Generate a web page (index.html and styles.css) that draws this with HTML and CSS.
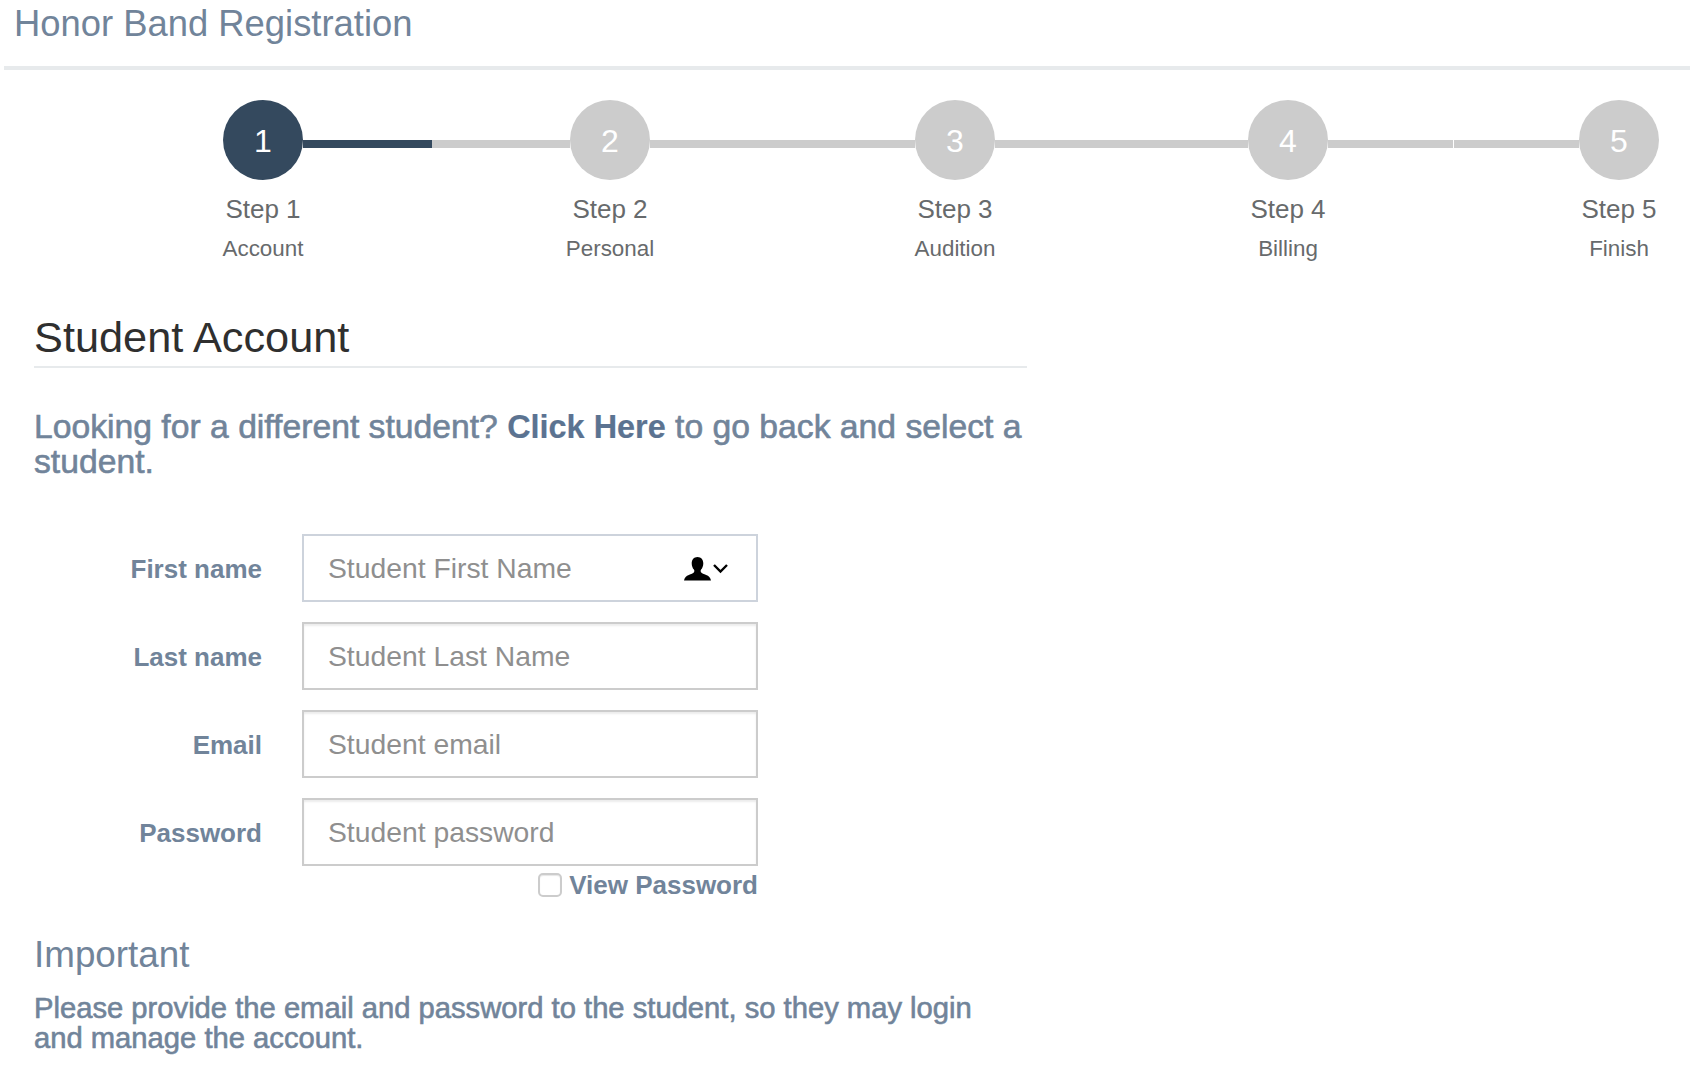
FILE: index.html
```html
<!DOCTYPE html>
<html lang="en">
<head>
<meta charset="utf-8">
<title>Honor Band Registration</title>
<link rel="stylesheet" href="styles.css">
</head>
<body>
<header class="top"><h1 class="brand">Honor Band Registration</h1></header>
<nav class="wizard">
  <div class="step current"><div class="dot">1</div><div class="step-name">Step 1</div><div class="step-sub">Account</div></div>
  <div class="link c1"><div class="fill"></div></div>
  <div class="step"><div class="dot">2</div><div class="step-name">Step 2</div><div class="step-sub">Personal</div></div>
  <div class="link c2"></div>
  <div class="step"><div class="dot">3</div><div class="step-name">Step 3</div><div class="step-sub">Audition</div></div>
  <div class="link c3"></div>
  <div class="step"><div class="dot">4</div><div class="step-name">Step 4</div><div class="step-sub">Billing</div></div>
  <div class="link c4"><div class="gap"></div></div>
  <div class="step"><div class="dot">5</div><div class="step-name">Step 5</div><div class="step-sub">Finish</div></div>
</nav>
<main class="content">
  <h2 class="section-title">Student Account</h2>
  <p class="lookup">Looking for a different student? <a class="lookup-link" href="#">Click Here</a> to go back and select a student.</p>
  <form class="form">
    <label class="field-label" for="fn">First name</label>
    <div class="input-wrap">
      <input class="input first" id="fn" type="text" placeholder="Student First Name">
      <svg class="contact-icon" width="46" height="24" viewBox="0 0 46 24" aria-hidden="true">
        <path fill="#000" d="M13.500 0C9.800 0 7.700 2.800 7.700 6.200c0 2.600.9 4.900 2.200 6.400.6.800.6 1.900.1 2.700-.8 1.200-2.900 1.800-5.200 2.600C2.300 18.900.6 20.200 0 23.500h27c-.6-3.300-2.300-4.600-4.800-5.600-2.300-.8-4.400-1.400-5.200-2.600-.5-.8-.5-1.900.1-2.700 1.300-1.500 2.200-3.800 2.200-6.400C19.300 2.800 17.200 0 13.500 0z"/>
        <path fill="none" stroke="#000" stroke-width="2.400" d="M30 8l6.500 6.500L43 8"/>
      </svg>
    </div>
    <label class="field-label" for="ln">Last name</label>
    <div class="input-wrap"><input class="input" id="ln" type="text" placeholder="Student Last Name"></div>
    <label class="field-label" for="em">Email</label>
    <div class="input-wrap"><input class="input" id="em" type="text" placeholder="Student email"></div>
    <label class="field-label" for="pw">Password</label>
    <div class="input-wrap"><input class="input" id="pw" type="text" placeholder="Student password"></div>
  </form>
  <label class="view-pass"><span class="check"></span><span>View Password</span></label>
  <h3 class="important">Important</h3>
  <p class="note">Please provide the email and password to the student, so they may login and manage the account.</p>
</main>
</body>
</html>
```
FILE: styles.css
```css
* { box-sizing: border-box; }
html, body { margin: 0; padding: 0; background: #fff; }
body { font-family: "Liberation Sans", Arial, sans-serif; color: #676a6c; height: 1066px; overflow: hidden; }

.top { margin-left: 4px; height: 70px; border-bottom: 4px solid #e7eaec; padding-left: 10px; }
.brand { margin: 0; font-size: 36.400px; font-weight: 400; line-height: 48px; color: #71849a; }

.wizard { display: flex; padding: 30px 0 0 223px; align-items: flex-start; }
.step { width: 80px; display: flex; flex-direction: column; align-items: center; flex: none; }
.dot { width: 80px; height: 80px; border-radius: 50%; background: #ccc; color: #fff; font-size: 32px; line-height: 83px; text-align: center; }
.current .dot { background: #34495e; }
.step-name { font-size: 26px; line-height: 30px; margin-top: 14px; white-space: nowrap; }
.step-sub { font-size: 22.400px; line-height: 26px; margin-top: 12px; white-space: nowrap; }
.link { height: 8px; margin-top: 40px; background: #ccc; flex: none; position: relative; }
.c1 { width: 267px; }
.c2 { width: 265px; }
.c3 { width: 253px; }
.c4 { width: 251px; }
.fill { width: 129px; height: 8px; background: #34495e; }
.gap { position: absolute; left: 125px; top: 0; width: 1px; height: 8px; background: #fff; }

.content { width: 1027px; padding-left: 34px; }
.section-title { margin: 50px 0 0; padding-bottom: 4px; border-bottom: 2px solid #e7eaec; font-size: 43.300px; font-weight: 400; line-height: 50px; color: #2f2f2f; }
.lookup { margin: 41px 0 0; font-size: 33.700px; line-height: 34px; color: #71849a; -webkit-text-stroke: 0.6px #71849a; }
.lookup-link { color: #5b7391; font-size: 32.400px; font-weight: 700; text-decoration: none; -webkit-text-stroke: 0.2px #5b7391; }

.form { display: grid; grid-template-columns: 228px 456px; column-gap: 40px; row-gap: 20px; margin-top: 56px; align-items: center; }
.field-label { text-align: right; padding-top: 2px; font-size: 26px; font-weight: 700; color: #71849a; }
.input-wrap { position: relative; }
.input { display: block; width: 100%; height: 68px; padding: 0 24px; border: 2px solid #ccc; border-radius: 0; background: #fff; font: 28.300px "Liberation Sans", Arial, sans-serif; box-shadow: inset 0 2px 2px rgba(0,0,0,.08); outline: none; }
.input.first { border-color: #cdd3dc; box-shadow: none; }
.input::placeholder { color: #8f8f8f; opacity: 1; }
.contact-icon { position: absolute; right: 28px; top: 23px; }

.view-pass { display: flex; width: 724px; justify-content: flex-end; align-items: center; gap: 7px; margin-top: 3px; font-size: 26px; font-weight: 700; line-height: 32px; color: #71849a; }
.check { width: 24px; height: 24px; border: 2px solid #ccc; border-radius: 5px; background: #fff; box-shadow: inset 0 1px 1px rgba(0,0,0,.1); }

.important { margin: 32px 0 0; font-size: 36.800px; font-weight: 400; line-height: 44px; color: #71849a; }
.note { margin: 16px 0 0; max-width: 950px; font-size: 29.200px; line-height: 30px; color: #71849a; -webkit-text-stroke: 0.6px #71849a; }
```
